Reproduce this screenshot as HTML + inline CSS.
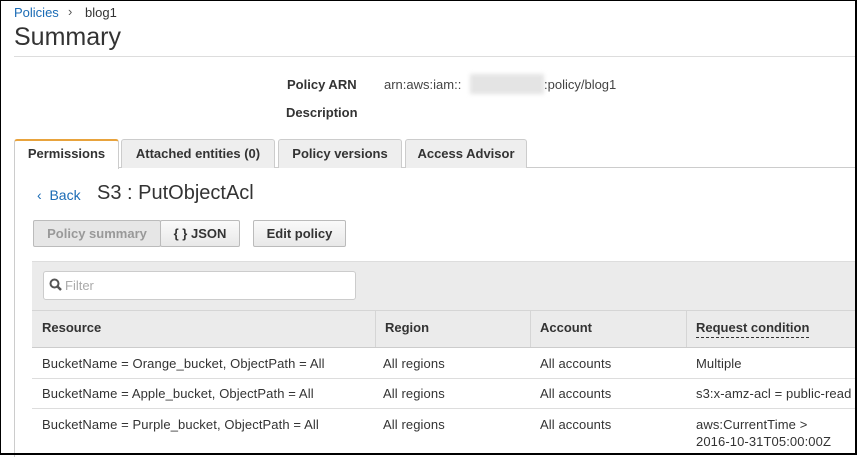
<!DOCTYPE html>
<html><head><meta charset="utf-8"><style>
*{margin:0;padding:0;box-sizing:border-box}
body{width:857px;height:455px;position:relative;overflow:hidden;background:#fff;font-family:"Liberation Sans",Arial,sans-serif;color:#333;font-size:13px}
.a{position:absolute;white-space:nowrap}
.tab{position:absolute;top:139px;height:29px;background:#eee;border:1px solid #ccc;border-bottom:none;font-weight:bold;font-size:13px;text-align:center;line-height:28px;border-radius:3px 3px 0 0;color:#333}
.btn{position:absolute;top:220px;height:27px;border:1px solid #bbb;background:linear-gradient(#fafafa,#e8e8e8);font-weight:bold;text-align:center;line-height:25px;font-size:13px;border-radius:2px}
.th{position:absolute;top:310px;height:38px;line-height:36px;font-weight:bold;padding-left:10px;border-right:1px solid #d5d5d5}
.row{position:absolute;left:32px;right:0;border-bottom:1px solid #ddd}
.c{position:absolute;letter-spacing:0.1px}
</style></head><body>
<div class="a" style="left:0;top:0;width:857px;height:455px;border:1px solid #000;border-right-width:2px;border-bottom-width:2px;z-index:9;pointer-events:none"></div>
<div class="a" style="left:14px;top:5px;color:#1a6bb5">Policies</div>
<div class="a" style="left:68px;top:4px;color:#555">›</div>
<div class="a" style="left:85px;top:5px">blog1</div>
<div class="a" style="left:14px;top:23px;font-size:25px;color:#333">Summary</div>
<div class="a" style="left:14px;top:56px;width:843px;height:1px;background:#ddd"></div>
<div class="a" style="left:287px;top:77px;font-weight:bold">Policy ARN</div>
<div class="a" style="left:384px;top:77px;color:#444">arn:aws:iam::</div>
<div class="a" style="left:470px;top:74px;width:74px;height:20px;background:#e4e4e4;filter:blur(2px)"></div>
<div class="a" style="left:544px;top:77px;color:#444">:policy/blog1</div>
<div class="a" style="left:286px;top:105px;font-weight:bold">Description</div>
<div class="a" style="left:118px;top:167px;width:739px;height:1px;background:#ccc"></div>
<div class="tab" style="left:14px;width:105px;background:#fff;border-top:2px solid #e8a33d;height:30px;line-height:25px">Permissions</div>
<div class="tab" style="left:121px;width:154px">Attached entities (0)</div>
<div class="tab" style="left:278px;width:124px">Policy versions</div>
<div class="tab" style="left:405px;width:122px">Access Advisor</div>
<div class="a" style="left:14px;top:167px;width:1px;height:290px;background:#ccc"></div>
<div class="a" style="left:37px;top:187px;color:#1a6bb5;font-size:14px">‹ &nbsp;Back</div>
<div class="a" style="left:97px;top:182px;font-size:20px;color:#333">S3 : PutObjectAcl</div>
<div class="btn" style="left:33px;width:128px;color:#999;background:#e6e6e6">Policy summary</div>
<div class="btn" style="left:160px;width:80px">{ } JSON</div>
<div class="btn" style="left:253px;width:93px">Edit policy</div>
<div class="a" style="left:32px;top:261px;width:825px;height:87px;background:#ebebeb;border-top:1px solid #ddd"></div>
<div class="a" style="left:43px;top:271px;width:313px;height:29px;background:#fff;border:1px solid #ccc;border-radius:3px"></div>
<svg class="a" style="left:49px;top:278px" width="14" height="14" viewBox="0 0 14 14"><circle cx="5.5" cy="5.5" r="4" fill="none" stroke="#555" stroke-width="2"/><path d="M8.5 8.5L12 12" stroke="#555" stroke-width="2.5"/></svg>
<div class="a" style="left:65px;top:278px;color:#aaa">Filter</div>
<div class="a" style="left:32px;top:310px;width:825px;height:1px;background:#d5d5d5"></div>
<div class="th" style="left:32px;width:344px">Resource</div>
<div class="th" style="left:375px;width:156px">Region</div>
<div class="th" style="left:530px;width:157px">Account</div>
<div class="th" style="left:686px;width:171px;border:none"><span style="border-bottom:1px dashed #333;padding-bottom:2px">Request condition</span></div>
<div class="row" style="top:347px;height:32px;border-top:1px solid #ccc"></div>
<div class="row" style="top:378px;height:31px"></div>
<div class="c" style="left:42px;top:356px">BucketName = Orange_bucket, ObjectPath = All</div>
<div class="c" style="left:383px;top:356px">All regions</div>
<div class="c" style="left:540px;top:356px">All accounts</div>
<div class="c" style="left:696px;top:356px">Multiple</div>
<div class="c" style="left:42px;top:386px">BucketName = Apple_bucket, ObjectPath = All</div>
<div class="c" style="left:383px;top:386px">All regions</div>
<div class="c" style="left:540px;top:386px">All accounts</div>
<div class="c" style="left:696px;top:386px">s3:x-amz-acl = public-read</div>
<div class="c" style="left:42px;top:417px">BucketName = Purple_bucket, ObjectPath = All</div>
<div class="c" style="left:383px;top:417px">All regions</div>
<div class="c" style="left:540px;top:417px">All accounts</div>
<div class="c" style="left:696px;top:417px">aws:CurrentTime &gt;</div>
<div class="c" style="left:696px;top:434px">2016-10-31T05:00:00Z</div>
</body></html>
